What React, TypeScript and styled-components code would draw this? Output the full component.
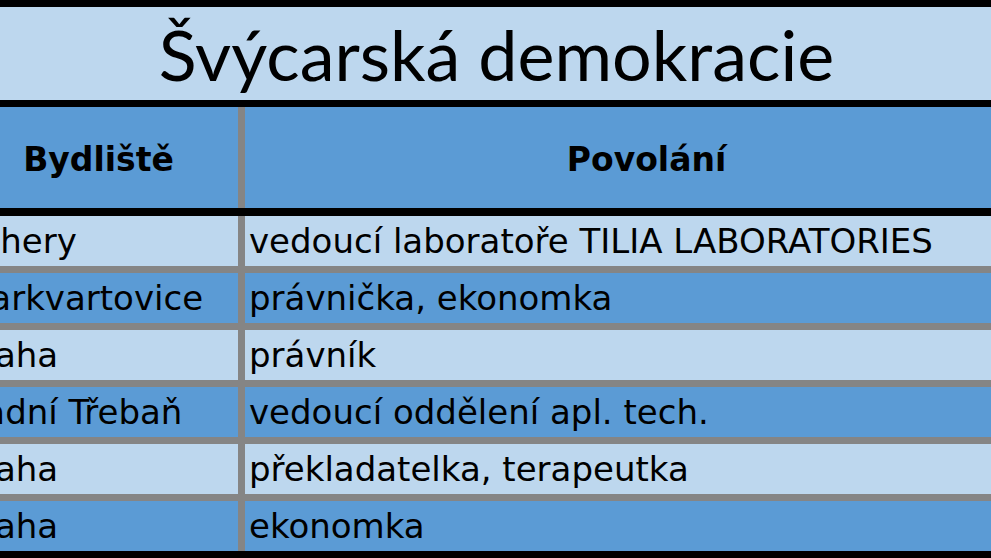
import React from 'react';
import styled, { createGlobalStyle } from 'styled-components';

const LIGHT = '#bdd7ee';
const MEDIUM = '#5b9bd5';
const GRID = '#858585';

const GlobalStyle = createGlobalStyle`
  html, body {
    margin: 0;
    padding: 0;
    overflow: hidden;
    background: #000;
  }
`;

// the table is wider than the window, its edges are cut off on both sides
const Frame = styled.div`
  width: 1089px;
  margin-left: -41px;
  background: #000;
  border-top: 7px solid #000;
  border-bottom: 7px solid #000;
`;

const Title = styled.div`
  height: 93px;
  background: ${LIGHT};
  display: flex;
  align-items: center;
  justify-content: center;
  font-family: Lato, 'Open Sans', sans-serif;
  font-size: 70px;
  color: #000;
  padding: 0 14px 0 0;
  box-sizing: border-box;
`;

const Grid = styled.div`
  display: grid;
  grid-template-columns: 279px 803px;
  column-gap: 7px;
  row-gap: 7px;
  background: ${GRID};
`;

const HeadGrid = styled(Grid)`
  border-top: 7px solid #000;
  border-bottom: 8px solid #000;
`;

const HeadCell = styled.div`
  height: 101px;
  background: ${MEDIUM};
  display: flex;
  align-items: center;
  justify-content: center;
  padding-top: 4px;
  box-sizing: border-box;
  font-family: 'DejaVu Sans', Verdana, sans-serif;
  font-weight: bold;
  font-size: 33px;
  color: #000;
`;

const Cell = styled.div<{ $shade: 'light' | 'medium'; $inset: number }>`
  height: 50px;
  line-height: 50px;
  padding-left: ${p => p.$inset}px;
  background: ${p => (p.$shade === 'light' ? LIGHT : MEDIUM)};
  font-family: 'DejaVu Sans', Verdana, sans-serif;
  font-size: 34px;
  color: #000;
  white-space: nowrap;
  overflow: hidden;
`;

const rows: [string, string][] = [
  ['Pchery', 'vedoucí laboratoře TILIA LABORATORIES'],
  ['Markvartovice', 'právnička, ekonomka'],
  ['Praha', 'právník'],
  ['Zadní Třebaň', 'vedoucí oddělení apl. tech.'],
  ['Praha', 'překladatelka, terapeutka'],
  ['Praha', 'ekonomka'],
];

function App(): JSX.Element {
  return (
    <>
      <GlobalStyle />
      <Frame>
        <Title>Švýcarská demokracie</Title>
        <HeadGrid>
          <HeadCell>Bydliště</HeadCell>
          <HeadCell>Povolání</HeadCell>
        </HeadGrid>
        <Grid>
          {rows.map(([place, job], i) => {
            const shade = i % 2 === 0 ? 'light' : 'medium';
            return (
              <React.Fragment key={i}>
                <Cell $shade={shade} $inset={2}>
                  {place}
                </Cell>
                <Cell $shade={shade} $inset={4}>
                  {job}
                </Cell>
              </React.Fragment>
            );
          })}
        </Grid>
      </Frame>
    </>
  );
}

export default App;
